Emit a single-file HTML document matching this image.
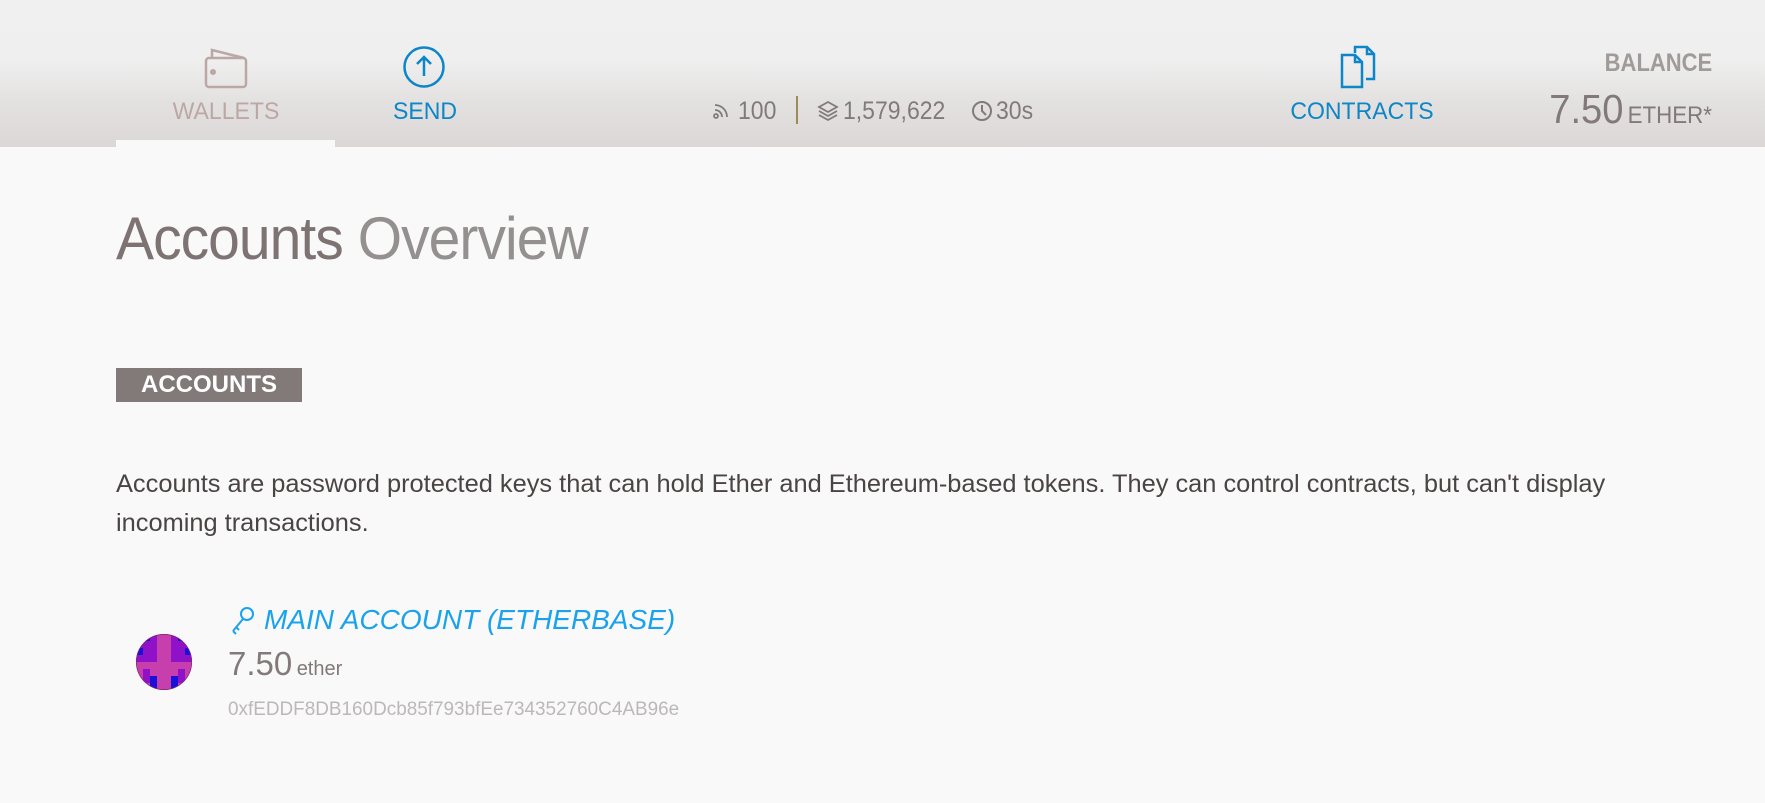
<!DOCTYPE html>
<html><head><meta charset="utf-8"><style>
body{margin:0;width:1765px;height:803px;background:#f9f9f9;font-family:"Liberation Sans",sans-serif;overflow:hidden;position:relative}
.hdr{position:absolute;left:0;top:0;width:1765px;height:147px;background:linear-gradient(#f0f0f0 0%,#efefef 40%,#e3e1e0 70%,#dbd7d6 100%)}
.a{position:absolute;white-space:nowrap}
.tab{position:absolute;left:116px;top:140px;width:219px;height:7px;background:#f9f9f9}
.nav{font-size:24px;transform:scaleX(.96);transform-origin:center}
</style></head><body>
<div class="hdr"></div>
<div class="tab"></div>
<svg class="a" style="left:203px;top:46px" width="46" height="44" viewBox="0 0 46 44" fill="none" stroke="#bba8a5" stroke-width="2.5"><path d="M9 13 V4 L41 12"/><rect x="3" y="12" width="40" height="29" rx="3"/><circle cx="10" cy="26" r="1.8" fill="#bba8a5"/></svg>
<div class="a nav" style="left:150px;top:98px;width:152px;text-align:center;color:#bba8a5">WALLETS</div>
<svg class="a" style="left:402px;top:45px" width="44" height="44" viewBox="0 0 44 44" fill="none" stroke="#0d86c8" stroke-width="2.5"><circle cx="22" cy="22" r="19.5"/><path d="M22 31V12M15 19l7-7 7 7"/></svg>
<div class="a nav" style="left:370px;top:98px;width:110px;text-align:center;color:#0d86c8">SEND</div>
<svg class="a" style="left:712px;top:102px" width="18" height="18" viewBox="0 0 18 18" fill="none" stroke="#827a79" stroke-width="1.8"><circle cx="4" cy="14" r="2"/><path d="M3 8a7 7 0 0 1 7 7M3 3a12 12 0 0 1 12 12"/></svg>
<div class="a" style="left:738px;top:97px;font-size:25px;color:#827a79;transform:scaleX(.92);transform-origin:left">100</div>
<div class="a" style="left:796px;top:96px;width:2px;height:28px;background:#9b8a5a"></div>
<svg class="a" style="left:817px;top:100px" width="22" height="22" viewBox="0 0 22 22" fill="none" stroke="#827a79" stroke-width="1.8"><path d="M11 2l9 5-9 5-9-5z"/><path d="M2 11l9 5 9-5M2 15l9 5 9-5"/></svg>
<div class="a" style="left:843px;top:97px;font-size:25px;color:#827a79;transform:scaleX(.92);transform-origin:left">1,579,622</div>
<svg class="a" style="left:971px;top:100px" width="22" height="22" viewBox="0 0 22 22" fill="none" stroke="#827a79" stroke-width="2"><circle cx="11" cy="11" r="9"/><path d="M11 5v6l4 4"/></svg>
<div class="a" style="left:996px;top:97px;font-size:25px;color:#827a79;transform:scaleX(.92);transform-origin:left">30s</div>
<svg class="a" style="left:1340px;top:45px" width="46" height="44" viewBox="0 0 46 44" fill="none" stroke="#0d86c8" stroke-width="2.5"><path d="M15 8V2h12l7 7v25h-8"/><path d="M27 2v7h7"/><path d="M2 10h13l7 7v25H2z"/><path d="M15 10v7h7"/></svg>
<div class="a nav" style="left:1272px;top:98px;width:180px;text-align:center;color:#0d86c8">CONTRACTS</div>
<div class="a" style="right:53px;top:49px;font-size:25px;font-weight:bold;color:#a09a99;transform:scaleX(.88);transform-origin:right">BALANCE</div>
<div class="a" style="right:53px;top:86px;color:#827a79;transform:scaleX(.93);transform-origin:right"><span style="font-size:41px">7.50</span> <span style="font-size:24px">ETHER*</span></div>
<div class="a" style="left:116px;top:204px;font-size:60px;color:#7c7372;letter-spacing:-1px;transform:scaleX(.95);transform-origin:left">Accounts <span style="color:#959090">Overview</span></div>
<div class="a" style="left:116px;top:368px;width:186px;height:34px;background:#827a79;color:#fff;font-weight:bold;font-size:24px;line-height:34px;text-align:center">ACCOUNTS</div>
<div class="a" style="left:116px;top:465px;font-size:25.4px;line-height:39px;color:#4a4444;white-space:normal;width:1640px">Accounts are password protected keys that can hold Ether and Ethereum-based tokens. They can control contracts, but can't display<br>incoming transactions.</div>
<svg class="a" style="left:136px;top:634px" width="56" height="56" viewBox="0 0 8 8"><defs><clipPath id="c"><circle cx="4" cy="4" r="4"/></clipPath></defs><g clip-path="url(#c)" shape-rendering="crispEdges"><rect width="8" height="8" fill="#c63fad"/><rect x="0" y="0" width="3" height="3" fill="#9012c8"/><rect x="5" y="0" width="3" height="3" fill="#9012c8"/><rect x="1" y="0" width="1" height="1" fill="#1a10d8"/><rect x="6" y="0" width="1" height="1" fill="#1a10d8"/><rect x="0" y="2" width="1" height="1" fill="#1a10d8"/><rect x="7" y="2" width="1" height="1" fill="#1a10d8"/><rect x="0" y="3" width="3" height="1" fill="#9012c8"/><rect x="5" y="3" width="3" height="1" fill="#9012c8"/><rect x="1" y="5" width="1" height="2" fill="#9012c8"/><rect x="6" y="5" width="1" height="2" fill="#9012c8"/><rect x="2" y="6" width="1" height="2" fill="#1a10d8"/><rect x="5" y="6" width="1" height="2" fill="#1a10d8"/></g><circle cx="4" cy="4" r="3.95" fill="none" stroke="#7a2a6a" stroke-width=".1"/></svg>
<svg class="a" style="left:230px;top:605px" width="26" height="30" viewBox="0 0 26 30" fill="none" stroke="#1aa3ec" stroke-width="2"><circle cx="17" cy="9" r="6"/><path d="M13 14L3 26M3 26l3 3M6 22l3 3"/></svg>
<div class="a" style="left:264px;top:604px;font-size:28px;font-style:italic;color:#1aa3ec">MAIN ACCOUNT (ETHERBASE)</div>
<div class="a" style="left:228px;top:645px;color:#827a79"><span style="font-size:33px">7.50</span> <span style="font-size:20px">ether</span></div>
<div class="a" style="left:228px;top:698px;font-size:19.5px;color:#bdb8b8;transform:scaleX(.97);transform-origin:left">0xfEDDF8DB160Dcb85f793bfEe734352760C4AB96e</div>
</body></html>
